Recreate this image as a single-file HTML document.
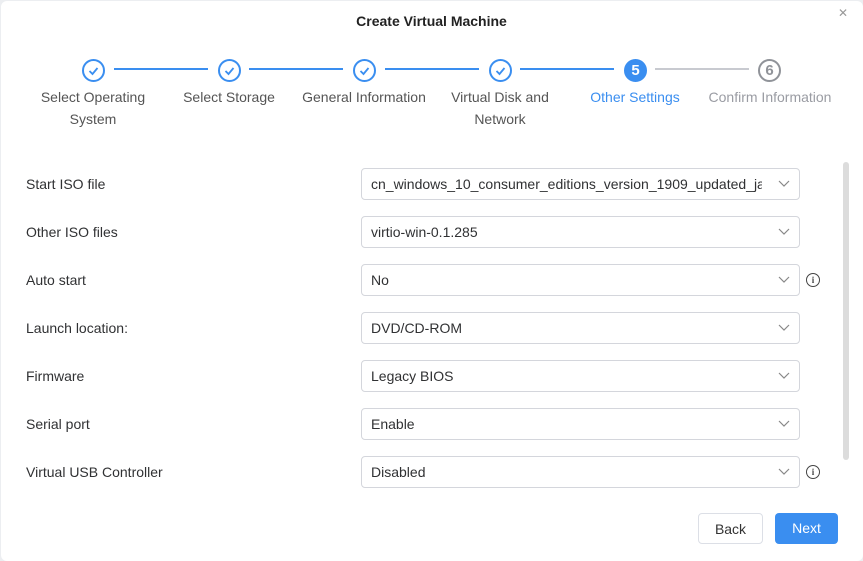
<!DOCTYPE html>
<html><head><style>
body{margin:0;width:863px;height:560px;overflow:hidden;background:#eceef1;font-family:"Liberation Sans",sans-serif;}
.dlg{position:absolute;left:1px;top:1px;width:862px;height:560px;background:#fff;border-radius:6px;}
.title{position:absolute;left:0;width:863px;top:13px;text-align:center;font-size:14px;font-weight:bold;color:#222;}
.x{position:absolute;left:838px;top:6px;font-size:12px;color:#999;}
.c{position:absolute;top:59px;width:19px;height:19px;border:2px solid #3a8ef0;border-radius:50%;box-sizing:content-box;}
.c svg{position:absolute;left:2px;top:2px}
.ln{position:absolute;top:68px;height:2px;background:#3a8ef0;}
.lbl{position:absolute;top:86px;width:140px;text-align:center;font-size:14px;line-height:22px;color:#555;}
.row{position:absolute;left:26px;font-size:14px;color:#303133;}
.sel{position:absolute;left:361px;height:30px;border:1px solid #d4d6dc;border-radius:4px;font-size:14px;color:#303133;line-height:30px;padding-left:9px;box-sizing:content-box;width:428px;overflow:hidden;white-space:nowrap;}
.sel svg{position:absolute;right:9px;top:11px;background:#fff;box-shadow:-10px 0 0 6px #fff}
.info{position:absolute;left:806px;width:12px;height:12px;border:1.2px solid #444;border-radius:50%;font-size:9px;font-weight:bold;text-align:center;line-height:12px;color:#444;font-family:"Liberation Serif",serif}
.btn{position:absolute;top:513px;height:31px;border-radius:4px;font-size:14px;line-height:31px;text-align:center;box-sizing:border-box}
</style></head><body>
<div class="dlg"></div>
<div class="title">Create Virtual Machine</div>
<div class="x">✕</div>
<div class="sb" style="position:absolute;left:843px;top:162px;width:6px;height:298px;background:#dcdcdc;border-radius:3px"></div>

<div class="c" style="left:82px"><svg width="15" height="15"><path d="M3.5 8l3 3 5-6" fill="none" stroke="#3a8ef0" stroke-width="1.8"/></svg></div>
<div class="c" style="left:218px"><svg width="15" height="15"><path d="M3.5 8l3 3 5-6" fill="none" stroke="#3a8ef0" stroke-width="1.8"/></svg></div>
<div class="c" style="left:353px"><svg width="15" height="15"><path d="M3.5 8l3 3 5-6" fill="none" stroke="#3a8ef0" stroke-width="1.8"/></svg></div>
<div class="c" style="left:489px"><svg width="15" height="15"><path d="M3.5 8l3 3 5-6" fill="none" stroke="#3a8ef0" stroke-width="1.8"/></svg></div>
<div class="c" style="left:624px;background:#3a8ef0;color:#fff;font-weight:bold;font-size:15px;text-align:center;line-height:19px">5</div>
<div class="c" style="left:758px;border-color:#909399;color:#909399;font-weight:bold;font-size:15px;text-align:center;line-height:19px">6</div>
<div class="ln" style="left:114px;width:94px"></div>
<div class="ln" style="left:249px;width:94px"></div>
<div class="ln" style="left:385px;width:94px"></div>
<div class="ln" style="left:520px;width:94px"></div>
<div class="ln" style="left:655px;width:94px;background:#c8cad0"></div>
<div class="lbl" style="left:23px">Select Operating<br>System</div>
<div class="lbl" style="left:159px">Select Storage</div>
<div class="lbl" style="left:294px">General Information</div>
<div class="lbl" style="left:430px">Virtual Disk and<br>Network</div>
<div class="lbl" style="left:565px;color:#3a8ef0">Other Settings</div>
<div class="lbl" style="left:700px;color:#9a9ca3">Confirm Information</div>

<div class="row" style="top:176px">Start ISO file</div>
<div class="sel" style="top:168px">cn_windows_10_consumer_editions_version_1909_updated_jan<svg width="12" height="8"><path d="M1 1l5 5 5-5" fill="none" stroke="#888" stroke-width="1.2"/></svg></div>
<div class="row" style="top:224px">Other ISO files</div>
<div class="sel" style="top:216px">virtio-win-0.1.285<svg width="12" height="8"><path d="M1 1l5 5 5-5" fill="none" stroke="#888" stroke-width="1.2"/></svg></div>
<div class="row" style="top:272px">Auto start</div>
<div class="sel" style="top:264px">No<svg width="12" height="8"><path d="M1 1l5 5 5-5" fill="none" stroke="#888" stroke-width="1.2"/></svg></div>
<div class="info" style="top:273px">i</div>
<div class="row" style="top:320px">Launch location:</div>
<div class="sel" style="top:312px">DVD/CD-ROM<svg width="12" height="8"><path d="M1 1l5 5 5-5" fill="none" stroke="#888" stroke-width="1.2"/></svg></div>
<div class="row" style="top:368px">Firmware</div>
<div class="sel" style="top:360px">Legacy BIOS<svg width="12" height="8"><path d="M1 1l5 5 5-5" fill="none" stroke="#888" stroke-width="1.2"/></svg></div>
<div class="row" style="top:416px">Serial port</div>
<div class="sel" style="top:408px">Enable<svg width="12" height="8"><path d="M1 1l5 5 5-5" fill="none" stroke="#888" stroke-width="1.2"/></svg></div>
<div class="row" style="top:464px">Virtual USB Controller</div>
<div class="sel" style="top:456px">Disabled<svg width="12" height="8"><path d="M1 1l5 5 5-5" fill="none" stroke="#888" stroke-width="1.2"/></svg></div>
<div class="info" style="top:465px">i</div>

<div class="btn" style="left:698px;width:65px;border:1px solid #dcdfe6;color:#333">Back</div>
<div class="btn" style="left:775px;width:63px;background:#3a8ef0;color:#fff">Next</div>
</body></html>
